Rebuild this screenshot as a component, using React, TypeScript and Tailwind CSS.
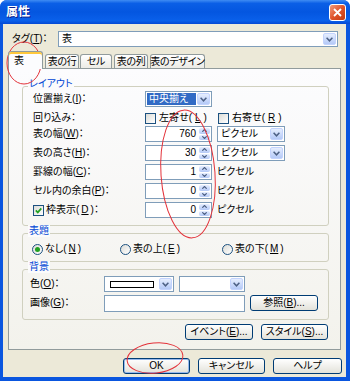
import { ReactNode } from "react";

const Arrow = () => (
  <svg width="7" height="5" viewBox="0 0 7 5">
    <path d="M0.6 0.8 L3.5 3.8 L6.4 0.8" fill="none" stroke="#4D6185" strokeWidth="1.5" />
  </svg>
);

const DropBtn = () => (
  <span className="ml-px flex w-[13px] shrink-0 items-center justify-center rounded-[2px] border border-[#C3D3FD] bg-linear-to-b from-[#E6EEFE] to-[#B4C9F7]">
    <Arrow />
  </span>
);

const Select = ({ w, children, hl }: { w: string; children?: ReactNode; hl?: boolean }) => (
  <div className={`flex h-[16px] shrink-0 border border-[#7F9DB9] bg-white p-px ${w}`}>
    <span className={`flex flex-1 items-center whitespace-nowrap px-[2px] ${hl ? "bg-[#316AC5] text-white" : ""}`}>{children}</span>
    <DropBtn />
  </div>
);

const Spin = ({ value }: { value: string }) => (
  <div className="flex h-[16px] w-[67px] shrink-0 border border-[#7F9DB9] bg-white p-px">
    <span className="flex flex-1 items-center justify-end pr-[3px]">{value}</span>
    <span className="flex w-[11px] flex-col gap-px">
      <span className="flex flex-1 items-center justify-center rounded-[2px] bg-linear-to-b from-[#E6EEFE] to-[#B4C9F7]">
        <svg width="5" height="3" viewBox="0 0 5 3">
          <path d="M0.3 2.7 L2.5 0.5 L4.7 2.7" fill="none" stroke="#4D6185" strokeWidth="1.2" />
        </svg>
      </span>
      <span className="flex flex-1 items-center justify-center rounded-[2px] bg-linear-to-b from-[#E6EEFE] to-[#B4C9F7]">
        <svg width="5" height="3" viewBox="0 0 5 3">
          <path d="M0.3 0.3 L2.5 2.5 L4.7 0.3" fill="none" stroke="#4D6185" strokeWidth="1.2" />
        </svg>
      </span>
    </span>
  </div>
);

const Check = ({ on }: { on?: boolean }) => (
  <span className="flex h-[11px] w-[11px] shrink-0 items-center justify-center border border-[#1C5180] bg-linear-to-br from-[#DCDCD7] to-white">
    {on && (
      <svg width="7" height="7" viewBox="0 0 7 7">
        <path d="M0.8 3.4 L2.8 5.4 L6.3 1.4" fill="none" stroke="#21A121" strokeWidth="1.7" />
      </svg>
    )}
  </span>
);

const Radio = ({ on }: { on?: boolean }) => (
  <span className="flex h-[11px] w-[11px] shrink-0 items-center justify-center rounded-full border border-[#1C5180] bg-linear-to-br from-[#DCDCD7] to-white">
    {on && <span className="h-[5px] w-[5px] rounded-full bg-[#21A121]" />}
  </span>
);

const Btn = ({ w, children, def }: { w: string; children: ReactNode; def?: boolean }) => (
  <div
    className={`flex h-[16px] shrink-0 items-center justify-center whitespace-nowrap rounded-[3px] border border-[#003C74] bg-linear-to-b from-white to-[#E3E2DA] ${w} ${def ? "shadow-[inset_0_0_0_1px_#97B8EC]" : ""}`}
  >
    {children}
  </div>
);

const Group = ({ title, className, children }: { title: string; className: string; children: ReactNode }) => (
  <div className={`relative rounded-[3px] border border-[#D0D0BF] ${className}`}>
    <span className="absolute -top-[9px] left-[5px] bg-[#FBFBFC] px-px text-[#0046D5]">{title}</span>
    {children}
  </div>
);

const Row = ({ label, children, className = "mt-[3px]" }: { label: ReactNode; children: ReactNode; className?: string }) => (
  <div className={`flex h-[16px] items-center whitespace-nowrap ${className}`}>
    <span className="flex w-[112px] shrink-0 items-center">{label}</span>
    {children}
  </div>
);

const Tab = ({ w, children, ml }: { w: string; children: ReactNode; ml: string }) => (
  <div
    className={`flex h-[14px] items-center justify-center whitespace-nowrap rounded-t-[3px] border border-b-0 border-[#919B9C] bg-linear-to-b from-white to-[#ECEBE5] tracking-[-0.3px] ${w} ${ml}`}
  >
    {children}
  </div>
);

export default function App() {
  return (
    <div className="relative flex h-[381px] w-[350px] flex-col overflow-hidden rounded-t-[7px] bg-[#0A56DF] text-[10px] leading-[12px] text-black font-['Liberation_Sans','Noto_Sans_CJK_JP',sans-serif] [font-feature-settings:'palt']">
      {/* title bar */}
      <div className="flex h-[24px] shrink-0 items-center justify-between bg-[linear-gradient(180deg,#3F8CF3_0%,#0B5FE6_14%,#0456E0_50%,#0A60EA_86%,#0448D4_100%)] pl-[6px] pr-[4px]">
        <span className="text-[12px] font-bold text-white [text-shadow:1px_1px_0_#0A1E8C]">属性</span>
        <span className="flex h-[17px] w-[17px] items-center justify-center rounded-[3px] border border-white bg-linear-to-br from-[#F09A7A] via-[#E0542A] to-[#C2390E]">
          <svg width="9" height="9" viewBox="0 0 9 9">
            <path d="M1 1 L8 8 M8 1 L1 8" stroke="white" strokeWidth="1.8" />
          </svg>
        </span>
      </div>

      {/* body */}
      <div className="mb-[4px] ml-[3px] mr-[4px] flex flex-1 flex-col bg-[#ECE9D8]">
        <div className="mt-[7px] flex h-[16px] items-center">
          <span className="w-[55px] shrink-0 whitespace-nowrap pl-[9px]">
            タグ(<u>T</u>)：
          </span>
          <Select w="w-[280px]">表</Select>
        </div>

        {/* tabs */}
        <div className="mt-[4px] flex h-[17px] items-end pl-[5px]">
          <div className="relative z-10 -mb-px flex h-[18px] w-[35px] items-center rounded-t-[3px] border border-b-0 border-[#919B9C] bg-[#FCFCFE] pl-[5px] shadow-[inset_0_2px_0_#FFC83C]">
            表
          </div>
          <Tab w="w-[34px]" ml="ml-[2px]">表の行</Tab>
          <Tab w="w-[32px]" ml="ml-[1px]">セル</Tab>
          <Tab w="w-[34px]" ml="ml-[2px]">表の列</Tab>
          <Tab w="w-[55px]" ml="ml-[2px]">表のデザイン</Tab>
        </div>

        {/* panel */}
        <div className="ml-[5px] flex h-[282px] w-[333px] flex-col border border-[#919B9C] bg-linear-to-b from-[#FCFCFE] to-[#F3F2EC] pl-[13px] pr-[11px] pt-[17px]">
          <Group title="レイアウト" className="pb-[7px] pl-[10px] pt-px">
            <Row label={<>位置揃え(<u>I</u>)：</>}>
              <Select w="w-[67px]" hl>
                中央揃え
              </Select>
            </Row>
            <Row label="回り込み：">
              <span className="flex w-[73px] items-center gap-[3px]">
                <Check />
                左寄せ(<u>L</u>)
              </span>
              <span className="flex items-center gap-[3px]">
                <Check />
                右寄せ(<u>R</u>)
              </span>
            </Row>
            <Row label={<>表の幅(<u>W</u>)：</>} className="mt-0">
              <Spin value="760" />
              <span className="ml-[5px]">
                <Select w="w-[68px]">ピクセル</Select>
              </span>
            </Row>
            <Row label={<>表の高さ(<u>H</u>)：</>}>
              <Spin value="30" />
              <span className="ml-[5px]">
                <Select w="w-[68px]">ピクセル</Select>
              </span>
            </Row>
            <Row label={<>罫線の幅(<u>C</u>)：</>}>
              <Spin value="1" />
              <span className="ml-[5px]">ピクセル</span>
            </Row>
            <Row label={<>セル内の余白(<u>P</u>)：</>}>
              <Spin value="0" />
              <span className="ml-[5px]">ピクセル</span>
            </Row>
            <Row
              label={
                <span className="flex items-center gap-[2px]">
                  <Check on />
                  枠表示(<u>D</u>)：
                </span>
              }
            >
              <Spin value="0" />
              <span className="ml-[5px]">ピクセル</span>
            </Row>
          </Group>

          <Group title="表題" className="mt-[7px] pb-[5px] pl-[9px] pt-[8px]">
            <div className="flex h-[14px] items-center whitespace-nowrap">
              <span className="flex w-[88px] items-center gap-[2px]">
                <Radio on />
                なし(<u>N</u>)
              </span>
              <span className="flex w-[102px] items-center gap-[2px]">
                <Radio />
                表の上(<u>E</u>)
              </span>
              <span className="flex items-center gap-[2px]">
                <Radio />
                表の下(<u>M</u>)
              </span>
            </div>
          </Group>

          <Group title="背景" className="mt-[7px] pb-[8px] pl-[7px] pt-[6px]">
            <div className="flex h-[16px] items-center whitespace-nowrap">
              <span className="w-[74px] shrink-0">
                色(<u>O</u>)：
              </span>
              <div className="flex h-[16px] w-[70px] border border-[#7F9DB9] bg-white p-px">
                <span className="flex flex-1 items-center px-[4px]">
                  <span className="h-[7px] w-full border border-black bg-white" />
                </span>
                <DropBtn />
              </div>
              <span className="ml-[5px]">
                <Select w="w-[66px]" />
              </span>
            </div>
            <div className="mt-[3px] flex h-[16px] items-center whitespace-nowrap">
              <span className="w-[74px] shrink-0">
                画像(<u>G</u>)：
              </span>
              <div className="h-[17px] w-[141px] border border-[#7F9DB9] bg-white" />
              <span className="ml-[5px]">
                <Btn w="w-[68px]">
                  参照(<u>B</u>)...
                </Btn>
              </span>
            </div>
          </Group>

          <div className="mt-[4px] flex justify-end gap-[8px] pr-px">
            <Btn w="w-[68px]">
              イベント(<u>E</u>)...
            </Btn>
            <Btn w="w-[67px]">
              スタイル(<u>S</u>)...
            </Btn>
          </div>
        </div>

        <div className="mt-[8px] flex justify-end gap-[8px] pr-[4px]">
          <Btn w="w-[67px]" def>
            OK
          </Btn>
          <Btn w="w-[67px]">キャンセル</Btn>
          <Btn w="w-[69px]">ヘルプ</Btn>
        </div>
      </div>

      {/* red hand-drawn marks */}
      <svg className="pointer-events-none absolute left-0 top-0" width="350" height="381">
        <ellipse cx="24" cy="63" rx="17" ry="21" fill="none" stroke="#E3323A" />
        <ellipse cx="188" cy="174" rx="27" ry="64" fill="none" stroke="#E3323A" transform="rotate(-4 188 174)" />
        <ellipse cx="155" cy="358" rx="28" ry="15" fill="none" stroke="#E3323A" transform="rotate(-6 155 358)" />
      </svg>
    </div>
  );
}
